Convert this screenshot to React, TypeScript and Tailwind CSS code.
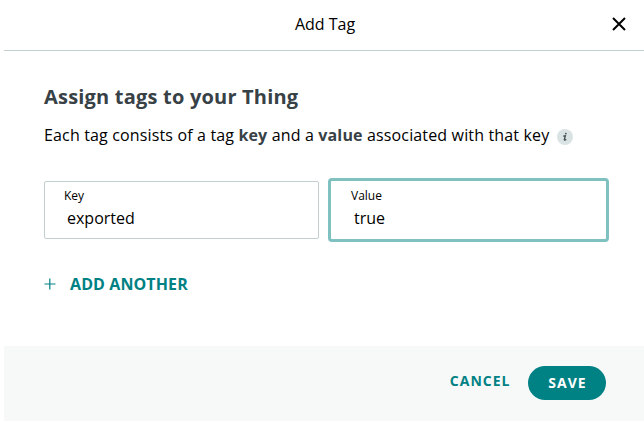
export default function App() {
  return (
    <div className="flex h-[421px] w-[644px] flex-col bg-white pl-1 font-['Open_Sans',sans-serif] text-black">
      <header className="flex h-[51px] shrink-0 items-center border-b border-[#c3cfcf] pb-[3px]">
        <div className="w-[34px]" />
        <h1 className="flex-1 text-center text-base">Add Tag</h1>
        <button aria-label="Close" className="mr-[18px] w-[14px]">
          <svg width="14" height="14" viewBox="0 0 14 14" className="block">
            <path d="M1 1 13 13M13 1 1 13" stroke="#000" strokeWidth="2" />
          </svg>
        </button>
      </header>
      <main className="flex h-[295px] shrink-0 flex-col pr-8 pl-10 pt-[31px]">
        <h2 className="h-[30px] text-xl leading-[30px] font-bold tracking-[0.01em] text-[#374146]">Assign tags to your Thing</h2>
        <div className="mt-[11px] flex h-6 items-center text-base leading-6 whitespace-nowrap">
          <p className="tracking-[0.15px]">Each tag consists of a tag <b className="text-[#374146]">key</b> and a <b className="text-[#374146]">value</b> associated with that key</p>
          <span className="mt-[3px] ml-[8px] flex size-4 items-center justify-center rounded-full bg-[#dae3e3]">
            <svg width="16" height="16" viewBox="0 0 16 16" fill="none" stroke="#434f54">
              <path d="M6.2 7.2 8.4 6.8 7.3 10.6Q7.2 11.6 9.3 10.4" strokeWidth="1.3" />
              <circle cx="8.8" cy="4.6" r="0.9" fill="#434f54" stroke="none" />
            </svg>
          </span>
        </div>
        <div className="mt-[31px] flex h-[64px] items-center">
          <label className="flex h-[58px] w-[275px] flex-col rounded-[2px] border border-[#c3cfcf] pt-[5px] pl-[19px]">
            <span className="text-xs leading-[18px]">Key</span>
            <span className="pl-[3px] text-base leading-[26px]">exported</span>
          </label>
          <label className="ml-[9px] flex h-[64px] w-[281px] flex-col rounded-[4px] border-3 border-[#7fc1c1] pt-[6px] pl-5">
            <span className="text-xs leading-[18px]">Value</span>
            <span className="pl-[3px] text-base leading-[26px]">true</span>
          </label>
        </div>
        <button className="mt-[30px] flex h-6 items-center text-base font-bold text-[#008184]">
          <svg width="12" height="12" viewBox="0 0 12 12"><path d="M5.8 .5V11.5M.5 6H11.5" stroke="currentColor" strokeWidth="1.2" /></svg>
          <span className="ml-[14px] tracking-[0.1px]">ADD ANOTHER</span>
        </button>
      </main>
      <footer className="flex flex-1 items-center justify-end bg-[#f7f9f9] pr-[38px] pb-[2px] text-sm font-bold tracking-[1px]">
        <button className="mr-[17.5px] pb-1 text-[#008184]">CANCEL</button>
        <button className="h-[34px] w-[78px] rounded-full bg-[#008184] pl-px text-white">SAVE</button>
      </footer>
    </div>
  );
}
